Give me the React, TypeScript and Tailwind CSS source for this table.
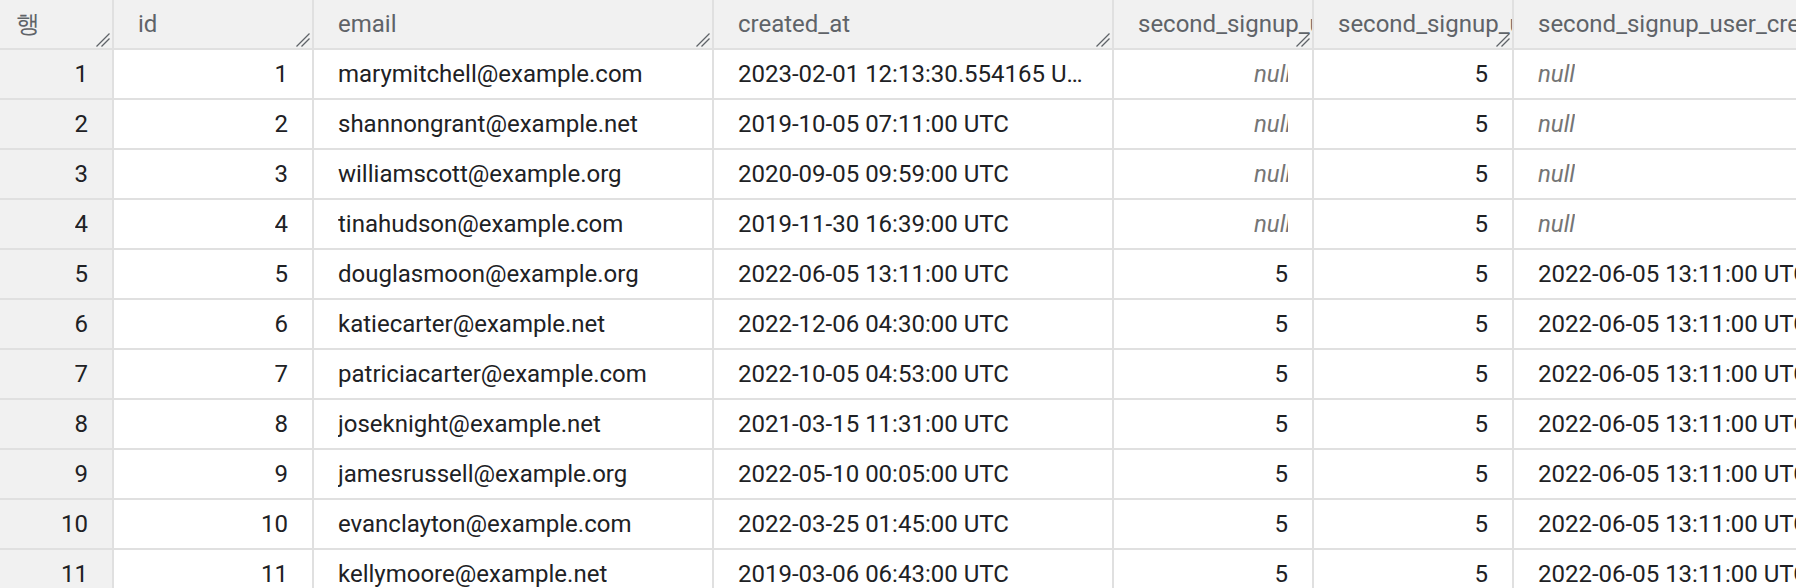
import React from 'react';

type Row = {
  n: number;
  email: string;
  createdAt: string;
  a: number | null;
  b: number;
  c: string | null;
};

const rows: Row[] = [
  { n: 1, email: 'marymitchell@example.com', createdAt: '2023-02-01 12:13:30.554165 UTC', a: null, b: 5, c: null },
  { n: 2, email: 'shannongrant@example.net', createdAt: '2019-10-05 07:11:00 UTC', a: null, b: 5, c: null },
  { n: 3, email: 'williamscott@example.org', createdAt: '2020-09-05 09:59:00 UTC', a: null, b: 5, c: null },
  { n: 4, email: 'tinahudson@example.com', createdAt: '2019-11-30 16:39:00 UTC', a: null, b: 5, c: null },
  { n: 5, email: 'douglasmoon@example.org', createdAt: '2022-06-05 13:11:00 UTC', a: 5, b: 5, c: '2022-06-05 13:11:00 UTC' },
  { n: 6, email: 'katiecarter@example.net', createdAt: '2022-12-06 04:30:00 UTC', a: 5, b: 5, c: '2022-06-05 13:11:00 UTC' },
  { n: 7, email: 'patriciacarter@example.com', createdAt: '2022-10-05 04:53:00 UTC', a: 5, b: 5, c: '2022-06-05 13:11:00 UTC' },
  { n: 8, email: 'joseknight@example.net', createdAt: '2021-03-15 11:31:00 UTC', a: 5, b: 5, c: '2022-06-05 13:11:00 UTC' },
  { n: 9, email: 'jamesrussell@example.org', createdAt: '2022-05-10 00:05:00 UTC', a: 5, b: 5, c: '2022-06-05 13:11:00 UTC' },
  { n: 10, email: 'evanclayton@example.com', createdAt: '2022-03-25 01:45:00 UTC', a: 5, b: 5, c: '2022-06-05 13:11:00 UTC' },
  { n: 11, email: 'kellymoore@example.net', createdAt: '2019-03-06 06:43:00 UTC', a: 5, b: 5, c: '2022-06-05 13:11:00 UTC' },
];

const headers = ['id', 'email', 'created_at', 'second_signup_user_id', 'second_signup_user_count', 'second_signup_user_created_at'];

const ResizeHandle: React.FC = () => (
  <svg className="absolute right-[2px] bottom-[1px]" width="14" height="14" viewBox="0 0 14 14" fill="none">
    <path d="M0.5 13.5L13.5 0.5M5.5 13.5L13.5 5.5" stroke="#5f6368" strokeWidth="1.3" />
  </svg>
);

const HeaderCell: React.FC<{ label: string; first?: boolean }> = ({ label, first }) => (
  <div
    className={`relative h-[50px] flex items-center overflow-hidden whitespace-nowrap bg-[#f1f1f1] border-r-2 border-b-2 border-[#e0e0e0] text-[#5f6368] ${
      first ? 'pl-[16px]' : 'pl-6 pr-[2px]'
    }`}
  >
    <span>{label}</span>
    <ResizeHandle />
  </div>
);

// right-aligned italic null gets its slanted tail cut, like the grid does
const Null: React.FC<{ clipped?: boolean }> = ({ clipped }) =>
  clipped ? (
    <span className="inline-block overflow-hidden align-top italic text-[#757575]">
      <span className="inline-block mr-[-3px]">null</span>
    </span>
  ) : (
    <span className="italic text-[#757575]">null</span>
  );

const Cell: React.FC<{ right?: boolean; gray?: boolean; children: React.ReactNode }> = ({ right, gray, children }) => (
  <div
    className={`h-[50px] flex items-center px-6 border-r-2 border-b-2 border-[#e0e0e0] min-w-0 ${
      right ? 'justify-end' : 'justify-start'
    } ${gray ? 'bg-[#f1f1f1]' : 'bg-white'}`}
  >
    <div className="overflow-hidden text-ellipsis whitespace-nowrap min-w-0">{children}</div>
  </div>
);

const App: React.FC = () => {
  return (
    <div className="w-[1804px] h-[588px] overflow-hidden bg-white font-['Roboto',sans-serif] text-[24px] text-[#202124]">
      <div className="w-[1796px] overflow-hidden">
        <div className="grid grid-cols-[114px_200px_400px_400px_200px_200px_400px] w-[1914px]">
          <HeaderCell label="행" first />
          {headers.map((h) => (
            <HeaderCell key={h} label={h} />
          ))}
          {rows.map((r) => (
            <React.Fragment key={r.n}>
              <Cell right gray>{r.n}</Cell>
              <Cell right>{r.n}</Cell>
              <Cell>{r.email}</Cell>
              <Cell>{r.createdAt}</Cell>
              <Cell right>{r.a === null ? <Null clipped /> : r.a}</Cell>
              <Cell right>{r.b}</Cell>
              <Cell>{r.c === null ? <Null /> : r.c}</Cell>
            </React.Fragment>
          ))}
        </div>
      </div>
    </div>
  );
};

export default App;
